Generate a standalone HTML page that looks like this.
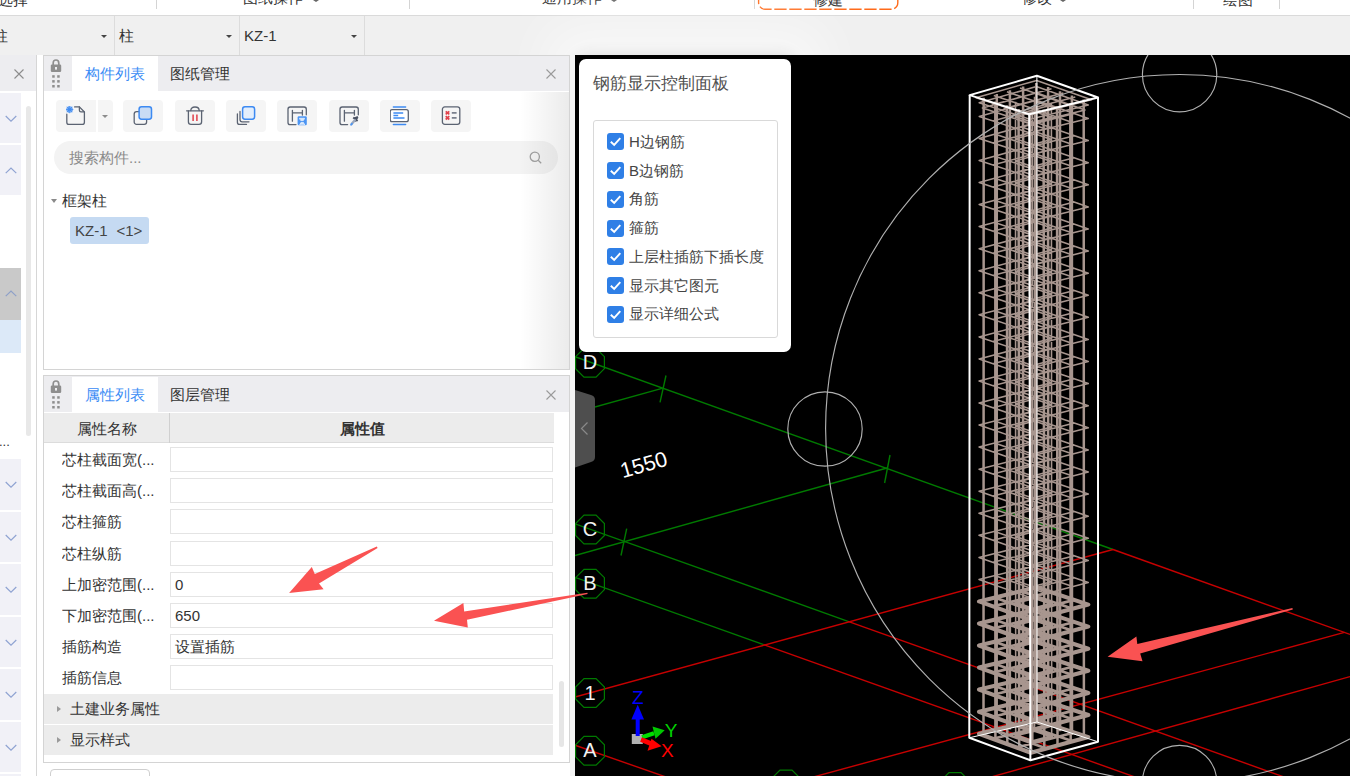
<!DOCTYPE html>
<html lang="zh"><head><meta charset="utf-8"><title>GTJ</title>
<style>
*{box-sizing:border-box;margin:0;padding:0}
html,body{width:1350px;height:776px;overflow:hidden;background:#fff}
body{position:relative;font-family:"Liberation Sans", sans-serif;font-size:15px;color:#333;line-height:1}
.a{position:absolute;white-space:nowrap;overflow:hidden}
.t{position:absolute;white-space:nowrap;line-height:20px;height:20px}
.btn{position:absolute;top:100px;width:40px;height:32px;background:#f5f5f5;border-radius:4px}
.btn svg{position:absolute;left:10px;top:6px}
.inp{position:absolute;left:170px;width:383px;height:25px;border:1px solid #e4e4e4;background:#fff;padding-left:4px;line-height:23px;white-space:nowrap;overflow:hidden;color:#333}
.lab{position:absolute;left:62px;width:106px;height:25px;line-height:25px;white-space:nowrap;overflow:hidden;color:#333}
.li{position:absolute;left:0;width:21px;height:50px;background:#f1f1f7}
.cb{position:absolute;left:606.500px;width:17px;height:17px;border-radius:3px;background:#2f7fe6}
.cl{position:absolute;left:629px;width:146px;height:20px;line-height:20px;white-space:nowrap;overflow:hidden;color:#444}
</style></head><body>

<div class="a" style="left:0;top:0;width:1350px;height:16px;background:#fff;border-bottom:1px solid #dadada"></div>
<div class="t" style="left:-2px;top:-10.2px;color:#333">选择</div>
<div class="t" style="left:243px;top:-12px;color:#333">图纸操作</div>
<div style="position:absolute;left:313px;top:0px;width:0;height:0;border-left:3.0px solid transparent;border-right:3.0px solid transparent;border-top:2px solid #666"></div>
<div class="t" style="left:542px;top:-12px;color:#333">通用操作</div>
<div style="position:absolute;left:611px;top:0px;width:0;height:0;border-left:3.0px solid transparent;border-right:3.0px solid transparent;border-top:2px solid #666"></div>
<div class="t" style="left:812.5px;top:-10px;color:#333">修建</div>
<div class="t" style="left:1022px;top:-12px;color:#333">修改</div>
<div style="position:absolute;left:1060px;top:0px;width:0;height:0;border-left:3.0px solid transparent;border-right:3.0px solid transparent;border-top:2px solid #666"></div>
<div class="t" style="left:1223px;top:-10px;color:#333">绘图</div>
<div class="a" style="left:156px;top:0;width:1px;height:9px;background:#d4d4d4"></div>
<div class="a" style="left:409px;top:0;width:1px;height:9px;background:#d4d4d4"></div>
<div class="a" style="left:754px;top:0;width:1px;height:9px;background:#d4d4d4"></div>
<div class="a" style="left:1193px;top:0;width:1px;height:9px;background:#d4d4d4"></div>
<div class="a" style="left:1279px;top:0;width:1px;height:9px;background:#d4d4d4"></div>
<svg style="position:absolute;left:750px;top:0" width="160" height="14" viewBox="750 0 160 14"><rect x="758.600" y="-20" width="139.200" height="29.200" rx="6.500" fill="none" stroke="#ff6a1a" stroke-width="1.400" stroke-dasharray="12.300 2.700" stroke-dashoffset="3"/></svg>
<div class="a" style="left:0;top:16px;width:1350px;height:39px;background:#f0f0f0"></div>
<div class="a" style="left:114px;top:16px;width:1px;height:39px;background:#dcdcdc"></div>
<div class="a" style="left:239px;top:16px;width:1px;height:39px;background:#dcdcdc"></div>
<div class="a" style="left:364px;top:16px;width:1px;height:39px;background:#dcdcdc"></div>
<div class="t" style="left:-7px;top:26px;color:#333">柱</div>
<div class="t" style="left:119px;top:26px;color:#333">柱</div>
<div class="t" style="left:244px;top:26px;color:#333">KZ-1</div>
<div style="position:absolute;left:101px;top:35px;width:0;height:0;border-left:3.0px solid transparent;border-right:3.0px solid transparent;border-top:3.5px solid #444"></div>
<div style="position:absolute;left:226px;top:35px;width:0;height:0;border-left:3.0px solid transparent;border-right:3.0px solid transparent;border-top:3.5px solid #444"></div>
<div style="position:absolute;left:351px;top:35px;width:0;height:0;border-left:3.0px solid transparent;border-right:3.0px solid transparent;border-top:3.5px solid #444"></div>
<div class="a" style="left:0;top:55px;width:37px;height:36px;background:#ededf0"></div>
<div class="a" style="left:36px;top:55px;width:1px;height:721px;background:#d6d6d6"></div>
<svg style="position:absolute;left:14px;top:69px" width="10" height="10" viewBox="0 0 10 10"><path d="M0.500 0.500L9.500 9.500M9.500 0.500L0.500 9.500" stroke="#8c8c8c" stroke-width="1.1"/></svg>
<div class="li" style="top:93px;height:50px"></div><svg style="position:absolute;left:5px;top:115px" width="12" height="7.200" viewBox="0 0 12 7.200"><path d="M0.700 1L6 6.200L11.300 1" fill="none" stroke="#8fa3d2" stroke-width="1.2"/></svg>
<div class="li" style="top:145px;height:50px"></div><svg style="position:absolute;left:5px;top:167px" width="12" height="7.200" viewBox="0 0 12 7.200"><path d="M0.700 6.200L6 1L11.300 6.200" fill="none" stroke="#8fa3d2" stroke-width="1.2"/></svg>
<div class="li" style="top:268px;height:52px;background:#c9c9c9"></div><svg style="position:absolute;left:5px;top:290px" width="12" height="7.200" viewBox="0 0 12 7.200"><path d="M0.700 6.200L6 1L11.300 6.200" fill="none" stroke="#8ea0c8" stroke-width="1.2"/></svg>
<div class="li" style="top:320px;height:33px;background:#dce9f8"></div>
<div class="a" style="left:26px;top:106px;width:5px;height:330px;background:#e8e8e8;border-radius:2.500px"></div>
<div class="t" style="left:-1px;top:432px;color:#333;font-size:13px">...</div>
<div class="li" style="top:459.0px;height:50.500px"></div><svg style="position:absolute;left:5px;top:481px" width="12" height="7.200" viewBox="0 0 12 7.200"><path d="M0.700 1L6 6.200L11.300 1" fill="none" stroke="#8fa3d2" stroke-width="1.2"/></svg>
<div class="li" style="top:511.6px;height:50.500px"></div><svg style="position:absolute;left:5px;top:534px" width="12" height="7.200" viewBox="0 0 12 7.200"><path d="M0.700 1L6 6.200L11.300 1" fill="none" stroke="#8fa3d2" stroke-width="1.2"/></svg>
<div class="li" style="top:564.1px;height:50.500px"></div><svg style="position:absolute;left:5px;top:586px" width="12" height="7.200" viewBox="0 0 12 7.200"><path d="M0.700 1L6 6.200L11.300 1" fill="none" stroke="#8fa3d2" stroke-width="1.2"/></svg>
<div class="li" style="top:616.6px;height:50.500px"></div><svg style="position:absolute;left:5px;top:639px" width="12" height="7.200" viewBox="0 0 12 7.200"><path d="M0.700 1L6 6.200L11.300 1" fill="none" stroke="#8fa3d2" stroke-width="1.2"/></svg>
<div class="li" style="top:669.2px;height:50.500px"></div><svg style="position:absolute;left:5px;top:691px" width="12" height="7.200" viewBox="0 0 12 7.200"><path d="M0.700 1L6 6.200L11.300 1" fill="none" stroke="#8fa3d2" stroke-width="1.2"/></svg>
<div class="li" style="top:721.8px;height:50.500px"></div><svg style="position:absolute;left:5px;top:744px" width="12" height="7.200" viewBox="0 0 12 7.200"><path d="M0.700 1L6 6.200L11.300 1" fill="none" stroke="#8fa3d2" stroke-width="1.2"/></svg>
<div class="li" style="top:774.3px;height:50.500px"></div><svg style="position:absolute;left:5px;top:796px" width="12" height="7.200" viewBox="0 0 12 7.200"><path d="M0.700 1L6 6.200L11.300 1" fill="none" stroke="#8fa3d2" stroke-width="1.2"/></svg>
<div class="a" style="left:579px;top:59px;width:212px;height:293px;border-radius:7px;overflow:visible;box-shadow:0 0 16px 3px rgba(0,0,0,0.13),0 0 50px 34px rgba(255,255,255,0.55)"></div>
<div class="a" style="left:43px;top:55px;width:527px;height:315px;border:1px solid #d4d4d4;background:#fff"></div>
<div class="a" style="left:44px;top:56px;width:525px;height:35px;background:#ededf0"></div>
<div class="a" style="left:72px;top:56px;width:86px;height:35px;background:#fff"></div>
<svg style="position:absolute;left:50px;top:59px" width="12" height="30" viewBox="0 0 12 30"><path d="M3.2 6V4.2Q3.200 1 6 1Q8.800 1 8.8 4.200V6" fill="none" stroke="#8e8e8e" stroke-width="1.7"/><rect x="0.8" y="5.6" width="10.400" height="7.400" rx="1.2" fill="#8e8e8e"/><rect x="5" y="8" width="2" height="2.600" fill="#ededf0"/><rect x="2.2" y="16.2" width="2.5" height="2.5" fill="#8e8e8e"/><rect x="7.2" y="16.2" width="2.5" height="2.5" fill="#8e8e8e"/><rect x="2.2" y="21.1" width="2.5" height="2.5" fill="#8e8e8e"/><rect x="7.2" y="21.1" width="2.5" height="2.5" fill="#8e8e8e"/><rect x="2.2" y="26.0" width="2.5" height="2.5" fill="#8e8e8e"/><rect x="7.2" y="26.0" width="2.5" height="2.5" fill="#8e8e8e"/></svg>
<div class="t" style="left:85px;top:64px;color:#3b8cf5">构件列表</div>
<div class="t" style="left:170px;top:64px;color:#333">图纸管理</div>
<svg style="position:absolute;left:546px;top:69px" width="10" height="10" viewBox="0 0 10 10"><path d="M0.500 0.500L9.500 9.500M9.500 0.500L0.500 9.500" stroke="#9a9a9a" stroke-width="1.1"/></svg>
<div class="btn" style="left:56px;border-radius:4px 0 0 4px"><svg width="20" height="20" viewBox="0 0 20 20" fill="none" stroke="#5b6372" stroke-width="1.3" stroke-linejoin="round" stroke-linecap="round">
<path d="M8.6 0.9H13.4L18.4 6V16.2Q18.4 18.4 16.2 18.4H3Q0.8 18.4 0.8 16.2V8.2"/><path d="M13.4 0.9V4.2Q13.4 5.8 15 5.8H18.2"/>
<path d="M3.6 0.2V6.8M0.3 3.5H6.9M1.2 1.1L6 5.9M6 1.1L1.2 5.900M2.3 0.600V6.400M4.9 0.600V6.400M0.700 2.200H6.500M0.700 4.800H6.500" stroke="#3d8af2" stroke-width="0.9"/></svg></div>
<div class="btn" style="left:97.500px;width:15px;border-radius:0 4px 4px 0"></div><div style="position:absolute;left:101.5px;top:114.5px;width:0;height:0;border-left:3.25px solid transparent;border-right:3.25px solid transparent;border-top:3.5px solid #8c8c8c"></div>
<div class="btn" style="left:123.3px"><svg width="20" height="20" viewBox="0 0 20 20" fill="none" stroke-width="1.3">
<rect x="1.2" y="5.7" width="12.400" height="12.600" rx="2.4" stroke="#5b6372"/>
<rect x="6.1" y="0.8" width="12.400" height="12.400" rx="2.4" stroke="#3d8af2" stroke-width="1.5" fill="#c9dcf5"/></svg></div>
<div class="btn" style="left:174.8px"><svg width="20" height="20" viewBox="0 0 20 20" fill="none" stroke="#5b6372" stroke-width="1.3" stroke-linecap="round">
<path d="M1.6 4.8H18.400"/><path d="M5.800 4.600Q5.800 1 10 1Q14.200 1 14.200 4.600"/>
<path d="M3.400 5V15.800Q3.400 18.400 6 18.400H14Q16.600 18.400 16.600 15.800V5"/>
<path d="M8.1 8.400V15M11.9 8.400V15" stroke="#e0404a" stroke-width="1.5" stroke-linecap="butt"/></svg></div>
<div class="btn" style="left:226px"><svg width="20" height="20" viewBox="0 0 20 20" fill="none" stroke-width="1.3" stroke-linecap="round">
<path d="M4 5.500V13.600Q4 15.800 6.200 15.800H13" stroke="#5b6372"/><path d="M1.4 8V16.200Q1.400 18.400 3.600 18.400H10.500" stroke="#5b6372"/>
<rect x="6.6" y="0.8" width="12" height="12.400" rx="2.4" stroke="#3d8af2" stroke-width="1.5" fill="#e3eefc"/></svg></div>
<div class="btn" style="left:277.4px"><svg width="20" height="20" viewBox="0 0 20 20" fill="none" stroke="#5b6372" stroke-width="1.3" stroke-linecap="round">
<path d="M9 18.6H3.200Q1 18.600 1 16.400V3.200Q1 1 3.200 1H17.100Q19.300 1 19.300 3.200V8.800"/>
<path d="M5.400 4.300V15.200M15.400 4.300V9M5.400 6.900H15.400"/>
<rect x="10.600" y="10.300" width="9.200" height="9" rx="1.300" fill="#4c95f3" stroke="none"/>
<path d="M12.800 12.300H17.600L16.400 14.400H14ZM12.800 18.800L14 16.400H16.400L17.600 18.800" stroke="#dbe9fc" stroke-width="1" fill="#dbe9fc"/></svg></div>
<div class="btn" style="left:328.5px"><svg width="20" height="20" viewBox="0 0 20 20" fill="none" stroke="#5b6372" stroke-width="1.3" stroke-linecap="round">
<path d="M8.600 18.600H3.200Q1 18.600 1 16.400V3.200Q1 1 3.200 1H17.100Q19.300 1 19.300 3.200V8.800"/>
<path d="M5.400 4.300V15.200M15.400 4.300V9M5.400 6.900H15.400"/>
<path d="M14.200 11.600L18.600 15M18.800 11L15.600 15.400M18.900 10.800L14.800 12.600" stroke="#4a5263" stroke-width="1.900" stroke-linecap="butt"/>
<path d="M15.800 14.200L12.600 18" stroke="#9aa7bd" stroke-width="2.400" stroke-linecap="round"/>
<path d="M12.900 17.800L12.100 18.800" stroke="#4c95f3" stroke-width="1.800" stroke-linecap="round"/></svg></div>
<div class="btn" style="left:380px"><svg width="20" height="20" viewBox="0 0 20 20" fill="none" stroke-width="1.3" stroke-linecap="round">
<path d="M3.400 0.900H15.600M3.400 18.400H15.600" stroke="#3d8af2" stroke-width="1.500"/>
<rect x="0.200" y="3.650" width="18.100" height="12" rx="2" stroke="#5b6372" fill="#fff"/>
<path d="M3.400 7H13.200M3.400 9.500H8.200M3.400 12H14.500" stroke="#3d8af2" stroke-width="1.400" stroke-linecap="butt"/></svg></div>
<div class="btn" style="left:431px"><svg width="20" height="20" viewBox="0 0 20 20" fill="none" stroke-width="1.3">
<rect x="1.400" y="0.900" width="17.400" height="17.400" rx="2.400" stroke="#5b6372"/>
<path d="M10.800 6.900H15.600M10.800 11.900H15.600" stroke="#7a808d" stroke-width="1.600"/>
<path d="M4.700 5.300L8.300 8.400M8.300 5.300L4.700 8.400M4.700 10.200L8.300 13.500M8.300 10.200L4.700 13.500" stroke="#e0404a" stroke-width="1.700"/></svg></div>
<div class="a" style="left:54px;top:141px;width:504px;height:33px;border-radius:16.500px;background:#f3f3f3"></div>
<div class="t" style="left:69px;top:148px;color:#8a8a8a">搜索构件...</div>
<svg style="position:absolute;left:529px;top:151px" width="14" height="14" viewBox="0 0 14 14"><circle cx="5.800" cy="5.800" r="4.600" fill="none" stroke="#a0a0a0" stroke-width="1.300"/><path d="M9.200 9.200L12.200 12.200" stroke="#a0a0a0" stroke-width="1.300"/></svg>
<div style="position:absolute;left:51.3px;top:199px;width:0;height:0;border-left:3.5px solid transparent;border-right:3.5px solid transparent;border-top:4px solid #8a8a8a"></div>
<div class="t" style="left:62px;top:190.500px;color:#333">框架柱</div>
<div class="a" style="left:70px;top:217px;width:79px;height:27px;border-radius:3px;background:#c5daf2"></div>
<div class="t" style="left:75px;top:220.500px;color:#444">KZ-1<span style="margin-left:9px">&lt;1&gt;</span></div>
<div class="a" style="left:520px;top:92px;width:49px;height:277px;background:linear-gradient(90deg,rgba(0,0,0,0),rgba(0,0,0,0.08))"></div>
<div class="a" style="left:43px;top:375px;width:527px;height:388px;border:1px solid #d4d4d4;background:#fff"></div>
<div class="a" style="left:44px;top:376px;width:525px;height:36px;background:#ededf0"></div>
<div class="a" style="left:72px;top:377px;width:86px;height:35px;background:#fff"></div>
<svg style="position:absolute;left:50px;top:380px" width="12" height="30" viewBox="0 0 12 30"><path d="M3.2 6V4.2Q3.200 1 6 1Q8.800 1 8.8 4.200V6" fill="none" stroke="#8e8e8e" stroke-width="1.7"/><rect x="0.8" y="5.6" width="10.400" height="7.400" rx="1.2" fill="#8e8e8e"/><rect x="5" y="8" width="2" height="2.600" fill="#ededf0"/><rect x="2.2" y="16.2" width="2.5" height="2.5" fill="#8e8e8e"/><rect x="7.2" y="16.2" width="2.5" height="2.5" fill="#8e8e8e"/><rect x="2.2" y="21.1" width="2.5" height="2.5" fill="#8e8e8e"/><rect x="7.2" y="21.1" width="2.5" height="2.5" fill="#8e8e8e"/><rect x="2.2" y="26.0" width="2.5" height="2.5" fill="#8e8e8e"/><rect x="7.2" y="26.0" width="2.5" height="2.5" fill="#8e8e8e"/></svg>
<div class="t" style="left:85px;top:384.500px;color:#3b8cf5">属性列表</div>
<div class="t" style="left:170px;top:384.500px;color:#333">图层管理</div>
<svg style="position:absolute;left:546px;top:389.5px" width="10" height="10" viewBox="0 0 10 10"><path d="M0.500 0.500L9.500 9.500M9.500 0.500L0.500 9.500" stroke="#9a9a9a" stroke-width="1.1"/></svg>
<div class="a" style="left:44px;top:413px;width:510px;height:30px;background:#ececec;border-bottom:1px solid #dcdcdc"></div>
<div class="a" style="left:169px;top:413px;width:1px;height:30px;background:#d0d0d0"></div>
<div class="t" style="left:44px;width:125px;text-align:center;top:419px;color:#333">属性名称</div>
<div class="t" style="left:170px;width:384px;text-align:center;top:419px;color:#333;font-weight:bold">属性值</div>
<div class="lab" style="top:447.0px">芯柱截面宽(...</div><div class="inp" style="top:447.0px"></div>
<div class="lab" style="top:478.2px">芯柱截面高(...</div><div class="inp" style="top:478.2px"></div>
<div class="lab" style="top:509.4px">芯柱箍筋</div><div class="inp" style="top:509.4px"></div>
<div class="lab" style="top:540.6px">芯柱纵筋</div><div class="inp" style="top:540.6px"></div>
<div class="lab" style="top:571.8px">上加密范围(...</div><div class="inp" style="top:571.8px">0</div>
<div class="lab" style="top:603.0px">下加密范围(...</div><div class="inp" style="top:603.0px">650</div>
<div class="lab" style="top:634.2px">插筋构造</div><div class="inp" style="top:634.2px">设置插筋</div>
<div class="lab" style="top:665.4px">插筋信息</div><div class="inp" style="top:665.4px"></div>
<div class="a" style="left:44px;top:694px;width:509px;height:30px;background:#ececec"></div>
<div style="position:absolute;left:57px;top:705.5px;width:0;height:0;border-top:3.5px solid transparent;border-bottom:3.5px solid transparent;border-left:4px solid #9a9a9a"></div>
<div class="t" style="left:70px;top:699px;color:#333">土建业务属性</div>
<div class="a" style="left:44px;top:725px;width:509px;height:30px;background:#ececec"></div>
<div style="position:absolute;left:57px;top:736.5px;width:0;height:0;border-top:3.5px solid transparent;border-bottom:3.5px solid transparent;border-left:4px solid #9a9a9a"></div>
<div class="t" style="left:70px;top:730px;color:#333">显示样式</div>
<div class="a" style="left:559px;top:681px;width:5px;height:66px;border-radius:2.500px;background:#e6e6e6"></div>
<div class="a" style="left:50px;top:769px;width:100px;height:20px;border:1px solid #cfcfcf;border-radius:4px;background:#fff"></div>
<div class="a" style="left:570px;top:55px;width:5px;height:721px;background:#f4f4f4"></div>
<div class="a" style="left:575px;top:55px;width:775px;height:721px;background:#000"></div>
<svg style="position:absolute;left:575px;top:55px;font-family:'Liberation Sans', sans-serif" width="775" height="721" viewBox="575 55 775 721">
<line x1="575.0" y1="356.7" x2="1113.0" y2="549.5" stroke="#007a00" stroke-width="1.4" />
<line x1="1113.0" y1="549.5" x2="1350.0" y2="634.4" stroke="#c60000" stroke-width="1.4" />
<line x1="575.0" y1="523.8" x2="848.0" y2="621.3" stroke="#007a00" stroke-width="1.4" />
<line x1="848.0" y1="621.3" x2="1290.0" y2="779.1" stroke="#c60000" stroke-width="1.4" />
<line x1="575.0" y1="577.3" x2="763.6" y2="644.6" stroke="#007a00" stroke-width="1.4" />
<line x1="763.6" y1="644.6" x2="1140.0" y2="778.8" stroke="#c60000" stroke-width="1.4" />
<line x1="575.0" y1="745.2" x2="670.0" y2="778.4" stroke="#c60000" stroke-width="1.4" />
<line x1="575.0" y1="697.0" x2="1113.0" y2="549.5" stroke="#c60000" stroke-width="1.4" />
<line x1="1344.4" y1="632.4" x2="810.0" y2="777.9" stroke="#c60000" stroke-width="1.4" />
<line x1="1350.0" y1="676.6" x2="980.0" y2="780.1" stroke="#c60000" stroke-width="1.4" />
<line x1="575.0" y1="412.6" x2="662.0" y2="388.3" stroke="#007a00" stroke-width="1.4" />
<line x1="666.0" y1="375.5" x2="660.0" y2="402.4" stroke="#007a00" stroke-width="1.4" />
<line x1="575.0" y1="555.5" x2="887.0" y2="468.0" stroke="#007a00" stroke-width="1.4" />
<line x1="626.7" y1="528.6" x2="621.0" y2="555.5" stroke="#007a00" stroke-width="1.4" />
<line x1="890.0" y1="455.0" x2="884.6" y2="483.0" stroke="#007a00" stroke-width="1.4" />
<polygon points="604.4,368.7 596.0,377.1 584.0,377.1 575.6,368.7 575.6,356.7 584.0,348.3 596.0,348.3 604.4,356.7" fill="none" stroke="#007a00" stroke-width="1.2"/>
<polygon points="604.4,535.5 596.0,543.9 584.0,543.9 575.6,535.5 575.6,523.5 584.0,515.1 596.0,515.1 604.4,523.5" fill="none" stroke="#007a00" stroke-width="1.2"/>
<polygon points="604.4,589.7 596.0,598.1 584.0,598.1 575.6,589.7 575.6,577.7 584.0,569.3 596.0,569.3 604.4,577.7" fill="none" stroke="#007a00" stroke-width="1.2"/>
<polygon points="604.4,699.0 596.0,707.4 584.0,707.4 575.6,699.0 575.6,687.0 584.0,678.6 596.0,678.6 604.4,687.0" fill="none" stroke="#007a00" stroke-width="1.2"/>
<polygon points="604.4,756.8 596.0,765.2 584.0,765.2 575.6,756.8 575.6,744.8 584.0,736.4 596.0,736.4 604.4,744.8" fill="none" stroke="#007a00" stroke-width="1.2"/>
<polygon points="800.4,790.5 792.0,798.9 780.0,798.9 771.6,790.5 771.6,778.5 780.0,770.1 792.0,770.1 800.4,778.5" fill="none" stroke="#007a00" stroke-width="1.2"/>
<polygon points="969.4,793.0 961.0,801.4 949.0,801.4 940.6,793.0 940.6,781.0 949.0,772.6 961.0,772.6 969.4,781.0" fill="none" stroke="#007a00" stroke-width="1.2"/>
<text x="590" y="369.3" fill="#f2f2f2" font-size="20" text-anchor="middle">D</text>
<text x="590" y="536.1" fill="#f2f2f2" font-size="20" text-anchor="middle">C</text>
<text x="590" y="590.3000000000001" fill="#f2f2f2" font-size="20" text-anchor="middle">B</text>
<text x="590" y="699.6" fill="#f2f2f2" font-size="20" text-anchor="middle">1</text>
<text x="590" y="757.4" fill="#f2f2f2" font-size="20" text-anchor="middle">A</text>
<text x="643.7" y="472" fill="#fff" font-size="21.500" text-anchor="middle" transform="rotate(-16 643.7 464.8)">1550</text>
<path d="M1015.5 101.8L1015.7 736.6M1032.3 107.4L1032.8 742.7M1034.5 96.7L1034.6 731.9M1051.4 102.5L1051.7 737.8M979.2 116.4L1029.9 132.9L1088.3 118.5L1036.4 100.3ZM992.9 120.9L1050.5 105.2M994.7 112.0L1045.7 129.0M1016.2 128.4L1074.2 113.6M1020.9 104.6L1072.5 122.4M1015.5 116.7L1032.4 122.3L1051.5 117.4L1034.5 111.6ZM979.2 138.5L1030.0 155.0L1088.3 140.6L1036.4 122.4ZM992.9 142.9L1050.5 127.3M994.7 134.1L1045.7 151.1M1016.2 150.6L1074.2 135.7M1020.9 126.7L1072.5 144.5M1015.5 138.8L1032.4 144.5L1051.5 139.5L1034.5 133.7ZM979.2 160.5L1030.0 177.2L1088.3 162.7L1036.4 144.5ZM992.9 165.0L1050.5 149.4M994.7 156.2L1045.8 173.3M1016.2 172.7L1074.2 157.8M1020.9 148.9L1072.5 166.6M1015.5 160.9L1032.4 166.6L1051.5 161.6L1034.5 155.8ZM979.2 182.6L1030.0 199.3L1088.3 184.8L1036.4 166.7ZM992.9 187.1L1050.5 171.6M994.7 178.3L1045.8 195.4M1016.3 194.8L1074.3 179.9M1020.9 171.0L1072.5 188.7M1015.5 183.0L1032.4 188.7L1051.5 183.7L1034.5 177.9ZM979.2 204.6L1030.1 221.4L1088.3 206.9L1036.4 188.8ZM992.9 209.2L1050.5 193.7M994.7 200.3L1045.8 217.5M1016.3 216.9L1074.3 202.0M1020.9 193.1L1072.5 210.8M1015.5 205.1L1032.4 210.8L1051.5 205.8L1034.5 200.0ZM979.2 226.6L1030.1 243.6L1088.3 229.0L1036.4 210.9ZM992.9 231.2L1050.5 215.8M994.7 222.4L1045.8 239.6M1016.3 239.0L1074.3 224.1M1020.9 215.2L1072.5 232.9M1015.5 227.2L1032.4 232.9L1051.5 227.9L1034.5 222.1ZM979.2 248.7L1030.1 265.7L1088.3 251.1L1036.4 233.1ZM992.9 253.3L1050.5 238.0M994.7 244.5L1045.9 261.7M1016.3 261.1L1074.3 246.2M1020.9 237.3L1072.6 255.0M1015.6 249.3L1032.4 255.0L1051.5 250.1L1034.5 244.2ZM979.1 270.7L1030.2 287.8L1088.3 273.2L1036.5 255.2ZM992.9 275.4L1050.5 260.1M994.6 266.5L1045.9 283.9M1016.4 283.2L1074.3 268.3M1020.9 259.4L1072.6 277.1M1015.6 271.4L1032.5 277.1L1051.5 272.2L1034.5 266.3ZM979.1 292.8L1030.2 310.0L1088.3 295.2L1036.5 277.4ZM993.0 297.4L1050.5 282.2M994.6 288.6L1045.9 306.0M1016.4 305.3L1074.3 290.4M1020.9 281.5L1072.6 299.2M1015.6 293.5L1032.5 299.2L1051.5 294.3L1034.5 288.5ZM979.1 314.8L1030.2 332.1L1088.3 317.3L1036.5 299.5ZM993.0 319.5L1050.5 304.3M994.6 310.7L1045.9 328.1M1016.4 327.4L1074.3 312.5M1020.9 303.6L1072.6 321.3M1015.6 315.5L1032.5 321.3L1051.5 316.4L1034.5 310.6ZM979.1 336.9L1030.3 354.2L1088.3 339.4L1036.5 321.6ZM993.0 341.6L1050.5 326.5M994.6 332.8L1046.0 350.2M1016.4 349.5L1074.3 334.6M1020.9 325.8L1072.6 343.4M1015.6 337.6L1032.5 343.4L1051.5 338.5L1034.5 332.7ZM979.1 358.9L1030.3 376.4L1088.3 361.5L1036.5 343.8ZM993.0 363.7L1050.5 348.6M994.6 354.8L1046.0 372.4M1016.4 371.7L1074.3 356.7M1020.9 347.9L1072.6 365.5M1015.6 359.7L1032.5 365.5L1051.5 360.6L1034.5 354.8ZM979.1 381.0L1030.3 398.5L1088.3 383.6L1036.5 365.9ZM993.0 385.7L1050.5 370.7M994.6 376.9L1046.0 394.5M1016.5 393.8L1074.3 378.8M1020.9 370.0L1072.6 387.7M1015.6 381.8L1032.5 387.6L1051.6 382.7L1034.5 376.9ZM979.1 403.0L1030.4 420.6L1088.3 405.7L1036.5 388.0ZM993.0 407.8L1050.5 392.8M994.6 399.0L1046.0 416.6M1016.5 415.9L1074.3 400.9M1020.9 392.1L1072.6 409.8M1015.6 403.9L1032.5 409.7L1051.6 404.8L1034.5 399.0ZM979.1 425.1L1030.4 442.8L1088.3 427.8L1036.5 410.2ZM993.0 429.9L1050.5 415.0M994.6 421.0L1046.1 438.7M1016.5 438.0L1074.3 423.0M1020.9 414.2L1072.6 431.9M1015.6 426.0L1032.6 431.8L1051.6 426.9L1034.6 421.1ZM979.1 447.1L1030.4 464.9L1088.3 449.9L1036.5 432.3ZM993.0 451.9L1050.5 437.1M994.6 443.1L1046.1 460.9M1016.5 460.1L1074.3 445.1M1020.9 436.3L1072.7 454.0M1015.6 448.1L1032.6 453.9L1051.6 449.0L1034.6 443.2ZM979.1 469.2L1030.5 487.0L1088.3 472.0L1036.5 454.5ZM993.0 474.0L1050.5 459.2M994.6 465.2L1046.1 483.0M1016.6 482.2L1074.3 467.2M1020.9 458.4L1072.7 476.1M1015.6 470.2L1032.6 476.0L1051.6 471.1L1034.6 465.3ZM979.1 491.2L1030.5 509.2L1088.3 494.1L1036.5 476.6ZM993.0 496.1L1050.5 481.3M994.6 487.3L1046.1 505.1M1016.6 504.3L1074.3 489.4M1020.9 480.5L1072.7 498.2M1015.6 492.3L1032.6 498.1L1051.6 493.2L1034.6 487.4ZM979.0 513.3L1030.5 531.3L1088.3 516.2L1036.5 498.7ZM993.0 518.1L1050.5 503.5M994.6 509.3L1046.2 527.2M1016.6 526.4L1074.3 511.5M1020.9 502.7L1072.7 520.3M1015.6 514.4L1032.6 520.3L1051.6 515.3L1034.6 509.5ZM979.0 535.3L1030.6 553.5L1088.3 538.3L1036.5 520.9ZM993.0 540.2L1050.5 525.6M994.6 531.4L1046.2 549.3M1016.6 548.5L1074.3 533.6M1020.9 524.8L1072.7 542.4M1015.6 536.5L1032.6 542.4L1051.6 537.4L1034.6 531.6ZM979.0 557.4L1030.6 575.6L1088.3 560.4L1036.5 543.0ZM993.0 562.3L1050.5 547.7M994.6 553.5L1046.2 571.5M1016.7 570.7L1074.3 555.7M1020.9 546.9L1072.7 564.5M1015.6 558.6L1032.6 564.5L1051.6 559.6L1034.6 553.7ZM979.0 579.4L1030.6 597.7L1088.3 582.5L1036.5 565.1ZM993.0 584.4L1050.5 569.8M994.6 575.5L1046.3 593.6M1016.7 592.8L1074.3 577.8M1020.9 569.0L1072.7 586.6M1015.6 580.6L1032.7 586.6L1051.6 581.7L1034.6 575.8ZM976.0 97.7L1029.7 115.0L1091.5 99.8L1036.6 80.4ZM979.2 102.8L1029.9 119.2L1088.3 104.9L1036.4 86.6ZM982.4 108.0L1030.1 123.5L1085.0 109.9L1036.3 92.8ZM991.9 105.0L1051.5 88.7M993.8 95.6L1046.6 113.1M1003.5 108.7L1063.4 92.9M1006.9 91.8L1060.0 109.8M1015.2 112.5L1075.3 97.1M1020.0 88.1L1073.4 106.5" fill="none" stroke="#a8968f" stroke-width="1.550" stroke-linejoin="round"/>
<path d="M993.0 606.4L1050.5 592.0M994.6 597.6L1046.3 615.7M1016.7 614.9L1074.3 599.9M1020.9 591.1L1072.7 608.7M1015.6 602.7L1032.7 608.7L1051.6 603.8L1034.6 597.9ZM993.0 628.5L1050.5 614.1M994.6 619.7L1046.3 637.8M1016.7 637.0L1074.3 622.0M1020.9 613.2L1072.7 630.8M1015.6 624.8L1032.7 630.8L1051.6 625.9L1034.6 620.1ZM993.0 650.6L1050.5 636.2M994.6 641.8L1046.3 660.0M1016.7 659.1L1074.3 644.1M1020.9 635.3L1072.8 652.9M1015.6 646.9L1032.7 652.9L1051.7 648.0L1034.6 642.2ZM993.0 672.6L1050.5 658.3M994.5 663.8L1046.4 682.1M1016.8 681.2L1074.3 666.2M1020.9 657.5L1072.8 675.0M1015.6 669.0L1032.7 675.0L1051.7 670.1L1034.6 664.3ZM993.0 694.7L1050.5 680.5M994.5 685.9L1046.4 704.2M1016.8 703.3L1074.3 688.3M1020.9 679.6L1072.8 697.1M1015.6 691.1L1032.7 697.1L1051.7 692.2L1034.6 686.4ZM993.0 716.8L1050.5 702.6M994.5 708.0L1046.4 726.3M1016.8 725.4L1074.3 710.4M1020.9 701.7L1072.8 719.2M1015.6 713.2L1032.7 719.2L1051.7 714.3L1034.6 708.5ZM993.0 738.8L1050.5 724.7M994.5 730.0L1046.4 748.5M1016.8 747.5L1074.3 732.5M1020.9 723.8L1072.8 741.3M1015.7 735.3L1032.8 741.3L1051.7 736.4L1034.6 730.6Z" fill="none" stroke="#a8968f" stroke-width="2.700" stroke-linejoin="round"/>
<path d="M979.0 601.4L1030.7 619.9L1088.3 604.6L1036.5 587.3ZM979.0 623.5L1030.7 642.0L1088.3 626.6L1036.5 609.4ZM979.0 645.5L1030.7 664.1L1088.3 648.7L1036.5 631.6ZM979.0 667.6L1030.8 686.3L1088.3 670.8L1036.5 653.7ZM979.0 689.6L1030.8 708.4L1088.3 692.9L1036.5 675.8ZM979.0 711.7L1030.8 730.5L1088.4 715.0L1036.5 698.0ZM979.0 733.7L1030.9 752.7L1088.4 737.1L1036.5 720.1Z" fill="none" stroke="#a8968f" stroke-width="4.100" stroke-linejoin="round"/>
<path d="M983.7 97.7L983.5 735.9M1036.2 82.9L1036.3 723.4M995.3 101.5L995.4 740.3M1048.1 87.0L1048.2 727.3M1006.9 105.2L1007.3 744.6M1060.0 91.2L1060.1 731.2M1018.6 109.0L1019.2 748.9M1071.9 95.4L1072.0 735.1M1030.2 112.8L1031.1 753.2M1083.7 99.6L1083.9 739.0M996.8 94.0L996.7 732.8M1043.6 109.5L1044.3 749.7M1009.9 90.3L1009.9 729.6M1057.0 106.2L1057.5 746.1M1023.1 86.6L1023.1 726.5M1070.3 102.9L1070.7 742.6" fill="none" stroke="#a8968f" stroke-width="2.5"/>
<path d="M1036.9 75.8L1037.0 722.0" fill="none" stroke="#ffffff" stroke-width="1.0" stroke-linejoin="round"/>
<path d="M969.3 737.8L1037.0 722.0L1098.0 741.8" fill="none" stroke="#ffffff" stroke-width="1.0" stroke-linejoin="round"/>
<path d="M969.7 95.1L1036.9 75.8L1098.0 97.5L1029.2 114.2L969.7 95.1Z" fill="none" stroke="#ffffff" stroke-width="2.0" stroke-linejoin="round"/>
<path d="M969.7 95.1L969.3 737.8L1030.4 760.3L1098.0 741.8L1098.0 97.5" fill="none" stroke="#ffffff" stroke-width="2.0" stroke-linejoin="round"/>
<path d="M1029.2 114.2L1030.4 760.3" fill="none" stroke="#ffffff" stroke-width="2.0" stroke-linejoin="round"/>
<circle cx="1179.6" cy="428.5" r="354" fill="none" stroke="#b0b0b0" stroke-width="1.150"/>
<circle cx="1179.6" cy="74.6" r="37.2" fill="none" stroke="#b0b0b0" stroke-width="1.150"/>
<circle cx="825" cy="429" r="37.2" fill="none" stroke="#b0b0b0" stroke-width="1.150"/>
<circle cx="1179.6" cy="782.5" r="37.2" fill="none" stroke="#b0b0b0" stroke-width="1.150"/>
<g>
<rect x="631.8" y="734" width="11" height="10" fill="#b0b0b0"/>
<line x1="637.7" y1="736" x2="637.7" y2="717" stroke="#0000ff" stroke-width="4"/>
<polygon points="637.7,704.8 631.4,719.5 644,719.5" fill="#0000ff"/>
<line x1="642" y1="737.3" x2="654" y2="733.2" stroke="#00e000" stroke-width="4.2"/>
<polygon points="664.7,730.3 652.5,726.5 655.5,738.8" fill="#00c800"/>
<line x1="641" y1="739.5" x2="652" y2="744" stroke="#ff0000" stroke-width="4.6"/>
<polygon points="661.6,746.2 651.5,738.8 647.5,750.8" fill="#ff0000"/>
<text x="637.7" y="703.5" fill="#0000ff" font-size="19" text-anchor="middle">Z</text>
<text x="671.2" y="737.4" fill="#00d000" font-size="19" text-anchor="middle">Y</text>
<text x="667.3" y="757.2" fill="#ff0000" font-size="19" text-anchor="middle">X</text>
</g>
<path d="M575 390 L591 395 Q595 396 595 400 L595 457 Q595 461 591 462 L575 467.5 Z" fill="#4e4e4e"/>
<polyline points="587.5,422.5 581.5,428.5 587.5,434.5" fill="none" stroke="#8a8a8a" stroke-width="1.2"/>
</svg>
<div class="a" style="left:579px;top:59px;width:212px;height:293px;border-radius:7px;background:#fff"></div>
<div class="t" style="left:593px;top:72.500px;font-size:17.200px;color:#505050">钢筋显示控制面板</div>
<div class="a" style="left:593px;top:120px;width:185px;height:218px;border:1px solid #d9d9d9;border-radius:3px"></div>
<div class="cb" style="top:133.4px"><svg width="17" height="17" viewBox="0 0 17 17"><path d="M3.800 8.700L7.200 12L13.300 5.200" fill="none" stroke="#fff" stroke-width="1.900"/></svg></div>
<div class="cl" style="top:131.9px">H边钢筋</div>
<div class="cb" style="top:162.2px"><svg width="17" height="17" viewBox="0 0 17 17"><path d="M3.800 8.700L7.200 12L13.300 5.200" fill="none" stroke="#fff" stroke-width="1.900"/></svg></div>
<div class="cl" style="top:160.7px">B边钢筋</div>
<div class="cb" style="top:190.9px"><svg width="17" height="17" viewBox="0 0 17 17"><path d="M3.800 8.700L7.200 12L13.300 5.200" fill="none" stroke="#fff" stroke-width="1.900"/></svg></div>
<div class="cl" style="top:189.4px">角筋</div>
<div class="cb" style="top:219.7px"><svg width="17" height="17" viewBox="0 0 17 17"><path d="M3.800 8.700L7.200 12L13.300 5.200" fill="none" stroke="#fff" stroke-width="1.900"/></svg></div>
<div class="cl" style="top:218.2px">箍筋</div>
<div class="cb" style="top:248.4px"><svg width="17" height="17" viewBox="0 0 17 17"><path d="M3.800 8.700L7.200 12L13.300 5.200" fill="none" stroke="#fff" stroke-width="1.900"/></svg></div>
<div class="cl" style="top:246.9px">上层柱插筋下插长度</div>
<div class="cb" style="top:277.1px"><svg width="17" height="17" viewBox="0 0 17 17"><path d="M3.800 8.700L7.200 12L13.300 5.200" fill="none" stroke="#fff" stroke-width="1.900"/></svg></div>
<div class="cl" style="top:275.6px">显示其它图元</div>
<div class="cb" style="top:305.9px"><svg width="17" height="17" viewBox="0 0 17 17"><path d="M3.800 8.700L7.200 12L13.300 5.200" fill="none" stroke="#fff" stroke-width="1.900"/></svg></div>
<div class="cl" style="top:304.4px">显示详细公式</div>
<svg style="position:absolute;left:0;top:0;pointer-events:none" width="1350" height="776" viewBox="0 0 1350 776"><polygon points="377.6,548 376.800,546.600 314.8,574.1 311.8,566.9 289.1,593.1 323.6,589.3 319,583.4" fill="#fa5252"/><polygon points="587.6,594 587.400,592.800 464.2,611.5 463.4,603 434,620.7 467.8,627.6 467,619.8" fill="#fa5252"/><polygon points="1292.8,609.400 1292.400,608 1137.3,644.1 1136.4,636.4 1107.6,656.8 1142.5,661.2 1140.2,653.6" fill="#fa5252"/></svg>
</body></html>
